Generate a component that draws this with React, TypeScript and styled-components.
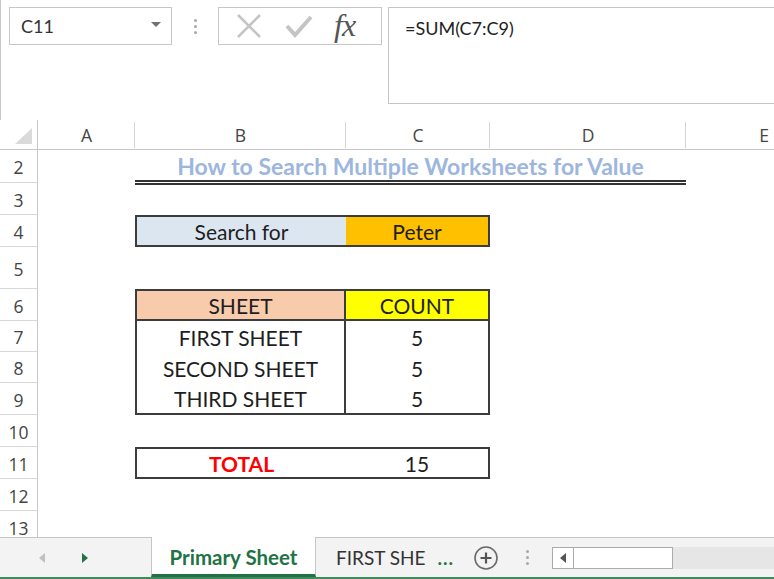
import React from "react";
import styled, { createGlobalStyle } from "styled-components";

const Global = createGlobalStyle`
  html, body { margin: 0; padding: 0; background: #fff; }
  body { width: 774px; height: 579px; overflow: hidden; font-family: "Open Sans", "Noto Sans", sans-serif; }
  * { box-sizing: border-box; }
`;

const Page = styled.div`
  width: 774px;
  height: 579px;
  display: flex;
  flex-direction: column;
  overflow: hidden;
  background: #fff;
`;

/* ---------- Formula bar ---------- */
const FormulaArea = styled.div`
  height: 120px;
  display: flex;
  align-items: flex-start;
  padding: 7px 0 0 8px;
  border-left: 1px solid #c8c8c8;
  flex-shrink: 0;
`;

const NameBox = styled.div`
  width: 163px;
  height: 38px;
  border: 1px solid #c6c6c6;
  display: flex;
  align-items: center;
  justify-content: space-between;
  padding: 0 10px 0 11px;
  font-family: "Lato", "Open Sans", sans-serif;
  font-size: 18px;
  color: #333;
`;

const Caret = styled.span`
  width: 0;
  height: 0;
  border-left: 5px solid transparent;
  border-right: 5px solid transparent;
  border-top: 5px solid #707070;
  margin-top: -4px;
`;

const VDots = styled.div`
  width: 46px;
  height: 38px;
  display: flex;
  flex-direction: column;
  align-items: center;
  justify-content: center;
  gap: 3px;
`;

const Dot = styled.span`
  width: 3px;
  height: 3px;
  border-radius: 50%;
  background: #a8a8a8;
`;

const ButtonBox = styled.div`
  width: 164px;
  height: 38px;
  border: 1px solid #c6c6c6;
  display: flex;
  align-items: center;
  padding: 0 0 0 15px;
  gap: 20px;
`;

const Fx = styled.span`
  font-family: "Liberation Serif", "DejaVu Serif", serif;
  font-style: italic;
  font-size: 32px;
  line-height: 1;
  color: #555;
  margin-left: 0px;
  margin-top: -3px;
  letter-spacing: -1px;
`;

const FormulaBox = styled.div`
  flex: 1;
  height: 97px;
  margin-left: 6px;
  border: 1px solid #c6c6c6;
  border-right: none;
  padding: 9px 0 0 16px;
  font-family: "Lato", "Open Sans", sans-serif;
  font-size: 18px;
  color: #222;
`;

/* ---------- Grid ---------- */
const COLS = "38px 97px 211px 144px 196px 156px";

const HeaderRow = styled.div`
  height: 30px;
  display: grid;
  grid-template-columns: ${COLS};
  border-bottom: 1px solid #c6c6c6;
  flex-shrink: 0;
`;

const Corner = styled.div`
  border-right: 1px solid #c6c6c6;
  display: flex;
  align-items: flex-end;
  justify-content: flex-end;
  padding: 0 5px 5px 0;
`;

const ColHead = styled.div`
  display: flex;
  align-items: center;
  justify-content: center;
  font-family: "Open Sans", "Noto Sans", sans-serif;
  font-size: 17.5px;
  color: #444;
  position: relative;
  padding-top: 1px;
  &::after {
    content: "";
    position: absolute;
    right: 0;
    top: 2px;
    bottom: 1px;
    width: 1px;
    background: #d4d4d4;
  }
`;

const Body = styled.div`
  flex: 1;
  display: flex;
  flex-direction: column;
  overflow: hidden;
`;

const SheetRow = styled.div<{ $h: number }>`
  height: ${(p) => p.$h}px;
  display: grid;
  grid-template-columns: ${COLS};
  flex-shrink: 0;
`;

const RowHead = styled.div`
  border-right: 1px solid #c6c6c6;
  border-bottom: 1px solid #d8d8d8;
  display: flex;
  align-items: center;
  justify-content: center;
  font-family: "Open Sans", "Noto Sans", sans-serif;
  font-size: 17.5px;
  color: #444;
  padding-top: 2px;
`;

type CellProps = {
  $bg?: string;
  $bold?: boolean;
  $color?: string;
  $t?: boolean;
  $r?: boolean;
  $b?: boolean;
  $l?: boolean;
  $span?: number;
};

const LINE = "2px solid #3c3c3c";

const Cell = styled.div<CellProps>`
  grid-column: span ${(p) => p.$span ?? 1};
  background: ${(p) => p.$bg ?? "transparent"};
  color: ${(p) => p.$color ?? "#1e1e1e"};
  font-weight: ${(p) => (p.$bold ? 700 : 400)};
  font-family: "Lato", "Open Sans", sans-serif;
  font-size: 21px;
  display: flex;
  align-items: center;
  justify-content: center;
  border-top: ${(p) => (p.$t ? LINE : "none")};
  border-right: ${(p) => (p.$r ? LINE : "none")};
  border-bottom: ${(p) => (p.$b ? LINE : "none")};
  border-left: ${(p) => (p.$l ? LINE : "none")};
  white-space: nowrap;
  padding-top: 1px;
`;

const Title = styled.div`
  grid-column: span 3;
  display: flex;
  align-items: center;
  justify-content: center;
  font-family: "Lato", "Open Sans", sans-serif;
  font-weight: 700;
  font-size: 23px;
  color: #9db6de;
  border-bottom: 5px double #333;
  margin-bottom: -2px;
  padding-top: 1px;
  white-space: nowrap;
`;

/* ---------- Tab bar ---------- */
const TabBar = styled.div`
  height: 42px;
  flex-shrink: 0;
  background: #f3f3f3;
  border-top: 1px solid #c6c6c6;
  border-bottom: 2px solid #3f8a5e;
  display: flex;
  align-items: stretch;
`;

const Nav = styled.div`
  width: 151px;
  display: flex;
  align-items: center;
  padding-left: 39px;
  gap: 37px;
`;

const Arrow = styled.span<{ $dir: "l" | "r"; $c: string }>`
  width: 0;
  height: 0;
  border-top: 5px solid transparent;
  border-bottom: 5px solid transparent;
  ${(p) => (p.$dir === "l" ? `border-right: 6px solid ${p.$c};` : `border-left: 6px solid ${p.$c};`)}
`;

const Tab = styled.div<{ $active?: boolean }>`
  width: ${(p) => (p.$active ? "165px" : "auto")};
  display: flex;
  align-items: center;
  justify-content: center;
  font-family: "Lato", "Open Sans", sans-serif;
  margin-top: -1px;
  ${(p) =>
    p.$active
      ? `background:#fff; color:#217346; font-weight:700; font-size:20.5px; border-left:1px solid #c6c6c6; border-right:1px solid #c6c6c6; border-bottom:3px solid #217346; padding-top:3px;`
      : `color:#333; font-size:19px; padding-left:20px;`}
`;

const More = styled.span`
  color: #217346;
  font-weight: 700;
  margin-left: 12px;
  letter-spacing: 1px;
`;

const AddWrap = styled.div`
  display: flex;
  align-items: center;
  margin-left: 19px;
`;

const SmallDots = styled(VDots)`
  width: 30px;
  height: 100%;
  margin-left: 13px;
`;

const Scroll = styled.div`
  flex: 1;
  display: flex;
  align-items: center;
  margin-left: 10px;
`;

const ScrollBox = styled.div`
  width: 121px;
  height: 22px;
  border: 1px solid #ababab;
  background: #fff;
  display: flex;
`;

const ScrollBtn = styled.div`
  width: 21px;
  border-right: 1px solid #ababab;
  display: flex;
  align-items: center;
  justify-content: center;
`;

const Track = styled.div`
  flex: 1;
  height: 22px;
  background: #e6e6e6;
`;

const rowHeights: Record<number, number> = {
  2: 33, 3: 32, 4: 32, 5: 42, 6: 32, 7: 31, 8: 31, 9: 32, 10: 32, 11: 32, 12: 32, 13: 32,
};

export default function App() {
  const cols = ["A", "B", "C", "D", "E"];
  return (
    <>
      <Global />
      <Page>
        <FormulaArea>
          <NameBox>
            <span>C11</span>
            <Caret />
          </NameBox>
          <VDots>
            <Dot />
            <Dot />
            <Dot />
          </VDots>
          <ButtonBox>
            <svg width="30" height="26" viewBox="0 0 30 26">
              <path d="M4 2 L26 24 M26 2 L4 24" stroke="#c4c4c4" strokeWidth="2.6" fill="none" />
            </svg>
            <svg width="30" height="26" viewBox="0 0 30 26">
              <path d="M3 13 L11 22 L27 4" stroke="#c4c4c4" strokeWidth="4" fill="none" strokeLinejoin="miter" />
            </svg>
            <Fx>fx</Fx>
          </ButtonBox>
          <FormulaBox>=SUM(C7:C9)</FormulaBox>
        </FormulaArea>

        <HeaderRow>
          <Corner>
            <svg width="17" height="16" viewBox="0 0 17 16">
              <polygon points="17,0 17,16 0,16" fill="#dadada" />
            </svg>
          </Corner>
          {cols.map((c) => (
            <ColHead key={c}>{c}</ColHead>
          ))}
        </HeaderRow>

        <Body>
          <SheetRow $h={rowHeights[2]}>
            <RowHead>2</RowHead>
            <Cell />
            <Title>How to Search Multiple Worksheets for Value</Title>
            <Cell />
          </SheetRow>
          <SheetRow $h={rowHeights[3]}>
            <RowHead>3</RowHead>
          </SheetRow>
          <SheetRow $h={rowHeights[4]}>
            <RowHead>4</RowHead>
            <Cell />
            <Cell $bg="#dce6f1" $t $b $l>Search for</Cell>
            <Cell $bg="#ffc000" $t $b $r>Peter</Cell>
          </SheetRow>
          <SheetRow $h={rowHeights[5]}>
            <RowHead>5</RowHead>
          </SheetRow>
          <SheetRow $h={rowHeights[6]}>
            <RowHead>6</RowHead>
            <Cell />
            <Cell $bg="#f8cbad" $t $b $l $r>SHEET</Cell>
            <Cell $bg="#ffff00" $t $b $r>COUNT</Cell>
          </SheetRow>
          {[
            [7, "FIRST SHEET"],
            [8, "SECOND SHEET"],
            [9, "THIRD SHEET"],
          ].map(([n, label]) => (
            <SheetRow key={n as number} $h={rowHeights[n as number]}>
              <RowHead>{n}</RowHead>
              <Cell />
              <Cell $l $r $b={n === 9}>{label}</Cell>
              <Cell $r $b={n === 9}>5</Cell>
            </SheetRow>
          ))}
          <SheetRow $h={rowHeights[10]}>
            <RowHead>10</RowHead>
          </SheetRow>
          <SheetRow $h={rowHeights[11]}>
            <RowHead>11</RowHead>
            <Cell />
            <Cell $t $b $l $bold $color="#ff0000">TOTAL</Cell>
            <Cell $t $b $r>15</Cell>
          </SheetRow>
          <SheetRow $h={rowHeights[12]}>
            <RowHead>12</RowHead>
          </SheetRow>
          <SheetRow $h={rowHeights[13]}>
            <RowHead>13</RowHead>
          </SheetRow>
        </Body>

        <TabBar>
          <Nav>
            <Arrow $dir="l" $c="#c0c0c0" />
            <Arrow $dir="r" $c="#217346" />
          </Nav>
          <Tab $active>Primary Sheet</Tab>
          <Tab>
            FIRST SHE<More>...</More>
          </Tab>
          <AddWrap>
            <svg width="26" height="26" viewBox="0 0 26 26">
              <circle cx="13" cy="13" r="11" stroke="#6a6a6a" strokeWidth="1.6" fill="none" />
              <path d="M13 7.5 V18.5 M7.5 13 H18.5" stroke="#555" strokeWidth="2.2" />
            </svg>
          </AddWrap>
          <SmallDots>
            <Dot />
            <Dot />
            <Dot />
          </SmallDots>
          <Scroll>
            <ScrollBox>
              <ScrollBtn>
                <Arrow $dir="l" $c="#555" />
              </ScrollBtn>
            </ScrollBox>
            <Track />
          </Scroll>
        </TabBar>
      </Page>
    </>
  );
}
